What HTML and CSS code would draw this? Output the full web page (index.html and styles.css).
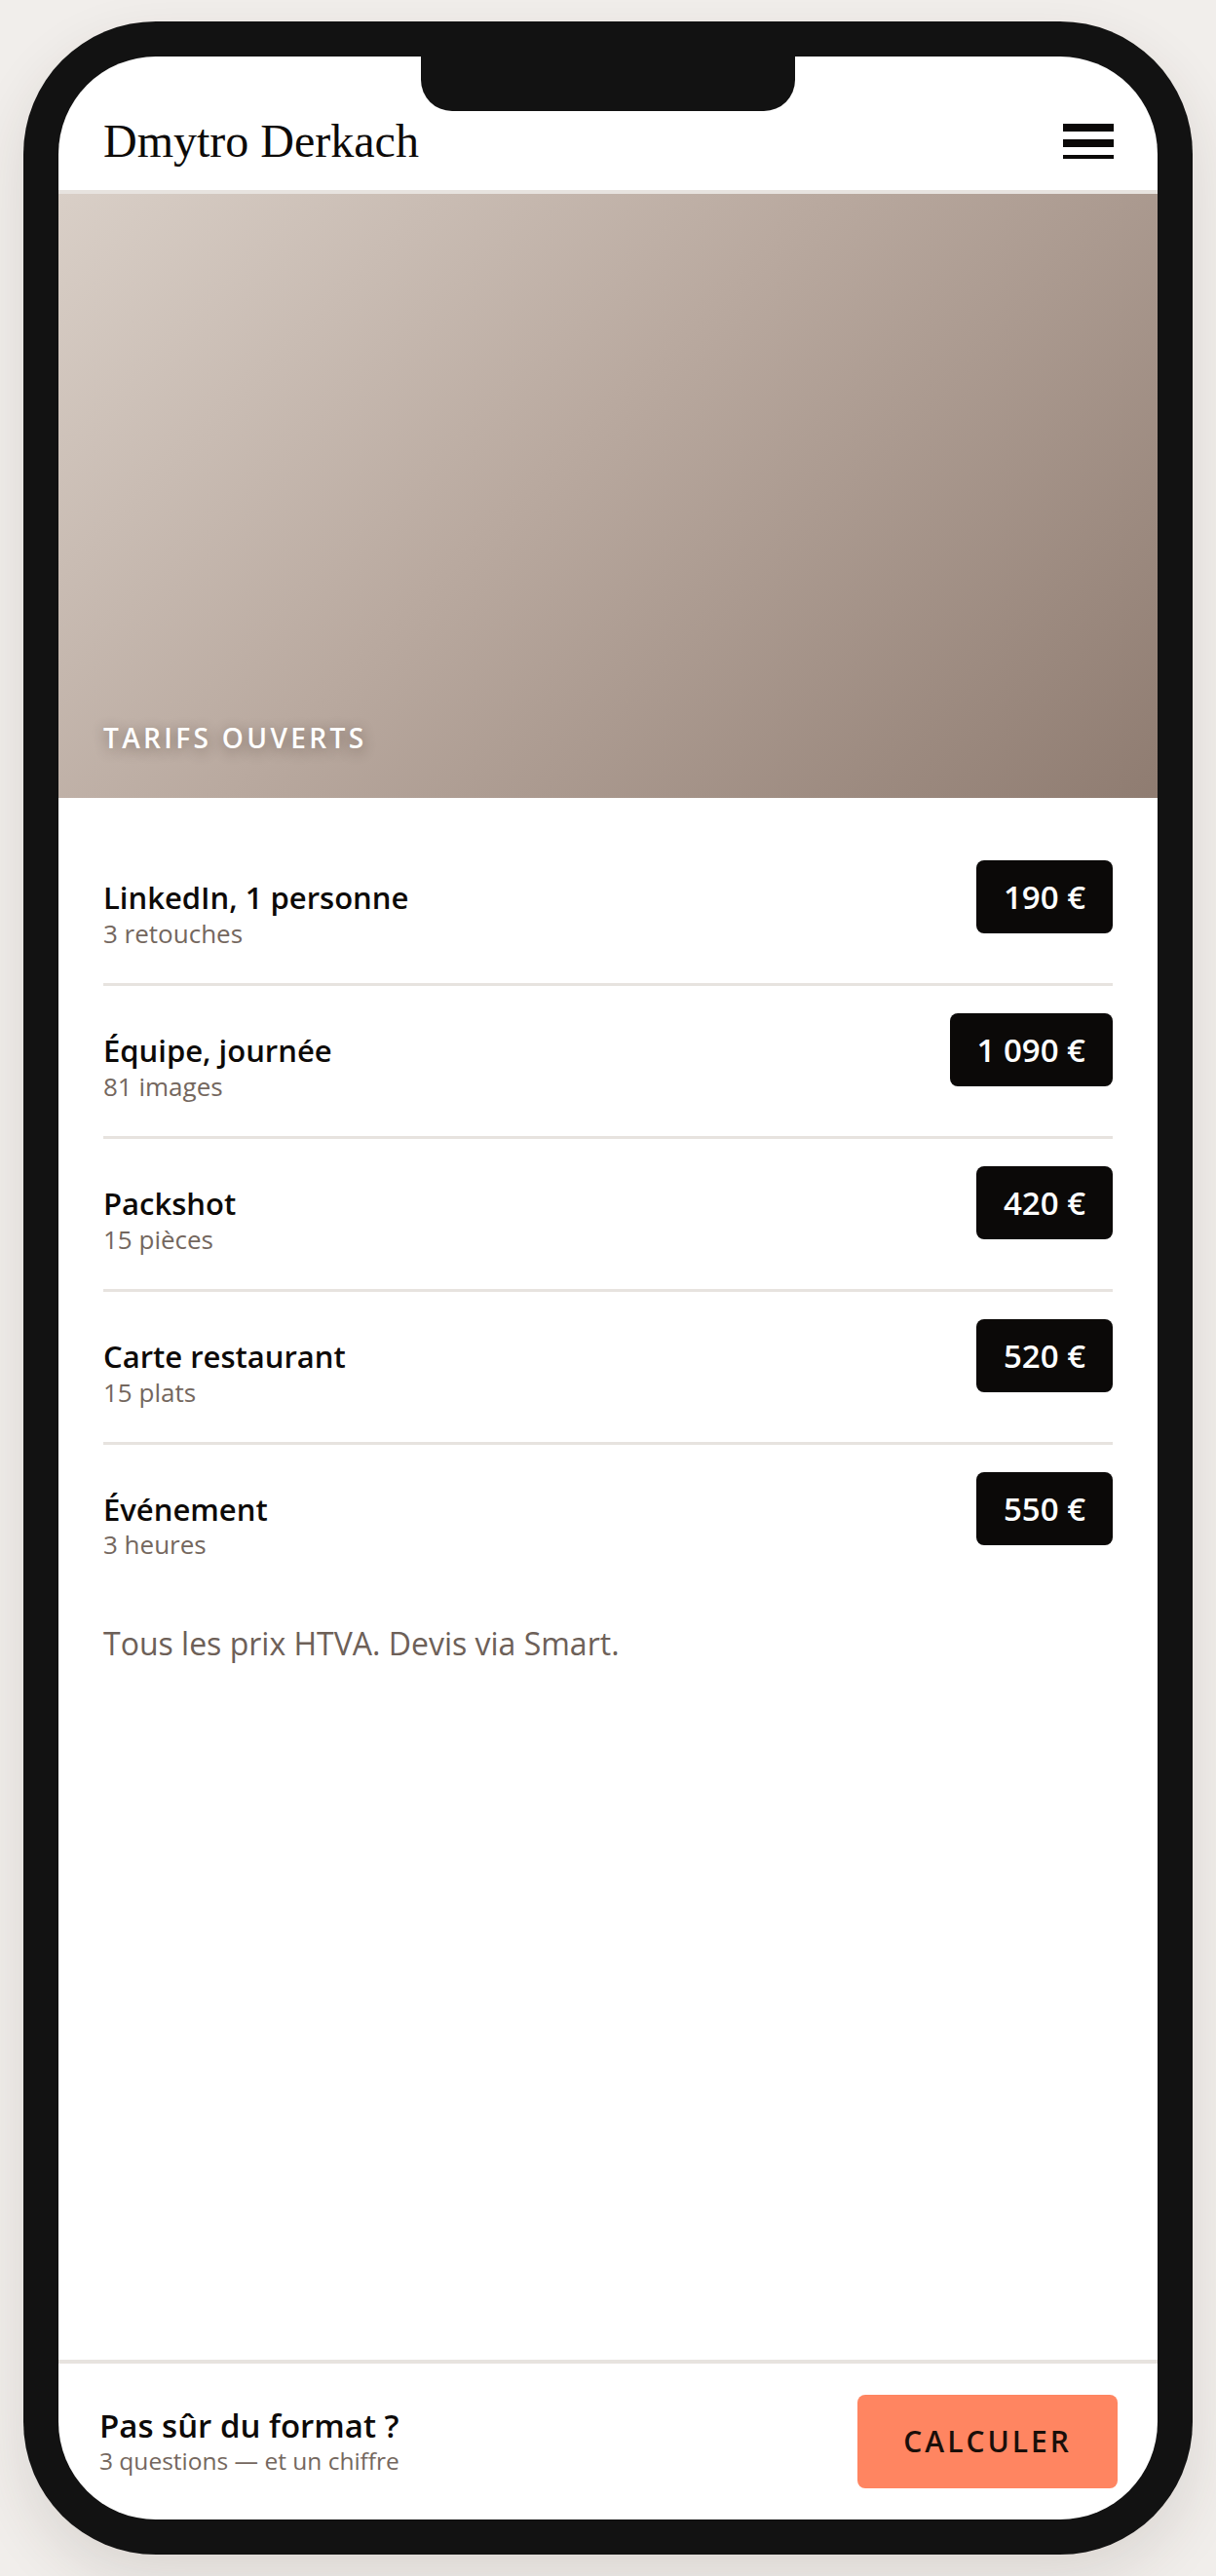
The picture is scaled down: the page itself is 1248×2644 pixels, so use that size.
FILE: index.html
```html
<!DOCTYPE html>
<html lang="fr">
<head>
    <meta charset="UTF-8">
    <meta name="viewport" content="width=device-width, initial-scale=1.0">
    <title>Dmytro Derkach - Tarifs</title>
    <link rel="stylesheet" href="styles.css">
</head>
<body>
    <div class="phone">
        <div class="screen">
            <div class="notch"></div>

            <header class="topbar">
                <span class="brand">Dmytro Derkach</span>
                <button class="menu-btn" aria-label="Menu">
                    <span></span><span></span><span></span>
                </button>
            </header>

            <section class="hero">
                <h1 class="hero-title">Tarifs ouverts</h1>
            </section>

            <main class="pricing">
                <div class="price-row">
                    <div class="price-info">
                        <h3>LinkedIn, 1 personne</h3>
                        <p>3 retouches</p>
                    </div>
                    <span class="price">190 €</span>
                </div>
                <div class="price-row">
                    <div class="price-info">
                        <h3>Équipe, journée</h3>
                        <p>81 images</p>
                    </div>
                    <span class="price">1 090 €</span>
                </div>
                <div class="price-row">
                    <div class="price-info">
                        <h3>Packshot</h3>
                        <p>15 pièces</p>
                    </div>
                    <span class="price">420 €</span>
                </div>
                <div class="price-row">
                    <div class="price-info">
                        <h3>Carte restaurant</h3>
                        <p>15 plats</p>
                    </div>
                    <span class="price">520 €</span>
                </div>
                <div class="price-row">
                    <div class="price-info">
                        <h3>Événement</h3>
                        <p>3 heures</p>
                    </div>
                    <span class="price">550 €</span>
                </div>
                <p class="price-note">Tous les prix HTVA. Devis via Smart.</p>
            </main>

            <footer class="cta-bar">
                <div class="cta-text">
                    <h4>Pas sûr du format ?</h4>
                    <p>3 questions — et un chiffre</p>
                </div>
                <button class="cta-btn">Calculer</button>
            </footer>
        </div>
    </div>
</body>
</html>
```

FILE: styles.css
```css
body {
    margin: 0;
    padding: 22px 24px;
    background: #f1eeeb;
    font-family: "Segoe UI", "Open Sans", sans-serif;
    color: #0d0a08;
}
.phone {
    height: 2600px;
    box-sizing: border-box;
    padding: 36px;
    background: #121212;
    border-radius: 136px;
    box-shadow: 0 24px 60px rgba(60, 40, 30, 0.12);
}
.screen {
    position: relative;
    height: 100%;
    background: #fff;
    border-radius: 100px;
    overflow: hidden;
    display: flex;
    flex-direction: column;
}
.notch {
    position: absolute;
    top: 0;
    left: 50%;
    width: 384px;
    height: 56px;
    margin-left: -192px;
    background: #121212;
    border-radius: 0 0 32px 32px;
}
.topbar {
    height: 141px;
    box-sizing: border-box;
    padding: 36px 45px 0 46px;
    display: flex;
    align-items: center;
    justify-content: space-between;
    border-bottom: 4px solid #e7e3df;
}
.brand {
    font-family: Georgia, "Liberation Serif", serif;
    font-size: 48px;
    line-height: 1;
}
.menu-btn {
    width: 52px;
    padding: 0;
    border: none;
    background: none;
    display: flex;
    flex-direction: column;
    gap: 8px;
}
.menu-btn span {
    display: block;
    height: 8px;
    background: #0b0908;
}
.menu-btn span:last-child {
    height: 4px;
}
.hero {
    height: 620px;
    box-sizing: border-box;
    padding: 0 46px 44px;
    display: flex;
    align-items: flex-end;
    background: linear-gradient(135deg, #d9cfc7 0%, #b9a99f 45%, #8f7c71 100%);
}
.hero-title {
    margin: 0;
    font-size: 28px;
    font-weight: 600;
    line-height: 1.3;
    letter-spacing: 0.12em;
    text-transform: uppercase;
    color: #fff;
    text-shadow: 0 3px 14px rgba(40, 25, 15, 0.45);
}
.pricing {
    flex: 1;
    padding: 36px 46px 0;
}
.price-row {
    display: flex;
    align-items: baseline;
    justify-content: space-between;
    padding: 28px 0 33px;
    border-bottom: 3px solid #e7e3df;
}
.price-row:last-of-type {
    border-bottom: none;
}
.price-info h3 {
    margin: 0;
    font-size: 31px;
    font-weight: 600;
    line-height: 1.22;
}
.price-info p {
    margin: 0;
    font-size: 26px;
    line-height: 1.35;
    color: #74675e;
}
.price {
    padding: 14px 28px;
    font-size: 33px;
    font-weight: 600;
    line-height: 47px;
    color: #fff;
    background: #0b0908;
    border-radius: 8px;
}
.price-note {
    margin: 28px 0 0;
    font-size: 32px;
    line-height: 1.35;
    color: #6d6058;
}
.cta-bar {
    display: flex;
    align-items: center;
    justify-content: space-between;
    padding: 32px 41px 32px 42px;
    border-top: 4px solid #e7e3df;
}
.cta-text h4 {
    margin: 0;
    font-size: 33px;
    font-weight: 600;
    line-height: 1.2;
}
.cta-text p {
    margin: 0;
    font-size: 24.5px;
    line-height: 1.3;
    color: #74675e;
}
.cta-btn {
    padding: 28px 47px;
    font-family: inherit;
    font-size: 30px;
    font-weight: 600;
    line-height: 40px;
    letter-spacing: 0.1em;
    text-transform: uppercase;
    color: #1a0f0a;
    background: #ff8561;
    border: none;
    border-radius: 8px;
}
```
